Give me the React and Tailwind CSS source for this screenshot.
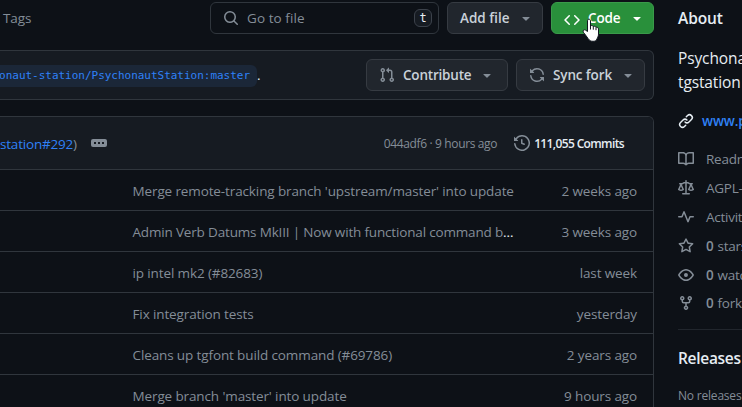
const paths = {
  search: "M10.68 11.74a6 6 0 0 1-7.922-8.982 6 6 0 0 1 8.982 7.922l3.04 3.04a.749.749 0 0 1-.326 1.275.749.749 0 0 1-.734-.215ZM11.5 7a4.499 4.499 0 1 0-8.997 0A4.499 4.499 0 0 0 11.5 7Z",
  pull: "M1.5 3.25a2.25 2.25 0 1 1 3 2.122v5.256a2.251 2.251 0 1 1-1.5 0V5.372A2.25 2.25 0 0 1 1.5 3.25Zm5.677-.177L9.573.677A.25.25 0 0 1 10 .854V2.5h1A2.5 2.5 0 0 1 13.5 5v5.628a2.251 2.251 0 1 1-1.5 0V5a1 1 0 0 0-1-1h-1v1.646a.25.25 0 0 1-.427.177L7.177 3.427a.25.25 0 0 1 0-.354ZM3.75 2.5a.75.75 0 1 0 0 1.5.75.75 0 0 0 0-1.5Zm0 9.5a.75.75 0 1 0 0 1.5.75.75 0 0 0 0-1.5Zm8.25.75a.75.75 0 1 0 1.5 0 .75.75 0 0 0-1.5 0Z",
  sync: "M1.705 8.005a.75.75 0 0 1 .834.656 5.5 5.5 0 0 0 9.592 2.97l-1.204-1.204a.25.25 0 0 1 .177-.427h3.646a.25.25 0 0 1 .25.25v3.646a.25.25 0 0 1-.427.177l-1.38-1.38A7.002 7.002 0 0 1 1.05 8.84a.75.75 0 0 1 .656-.834ZM8 2.5a5.487 5.487 0 0 0-4.131 1.869l1.204 1.204A.25.25 0 0 1 4.896 6H1.25A.25.25 0 0 1 1 5.75V2.104a.25.25 0 0 1 .427-.177l1.38 1.38A7.002 7.002 0 0 1 14.95 7.16a.75.75 0 0 1-1.49.178A5.5 5.5 0 0 0 8 2.5Z",
  code: "m11.28 3.22 4.25 4.25a.75.75 0 0 1 0 1.06l-4.25 4.25a.749.749 0 0 1-1.275-.326.749.749 0 0 1 .215-.734L13.94 8l-3.72-3.72a.749.749 0 0 1 .326-1.275.749.749 0 0 1 .734.215Zm-6.56 0a.751.751 0 0 1 1.042.018.751.751 0 0 1 .018 1.042L2.06 8l3.72 3.72a.749.749 0 0 1-.326 1.275.749.749 0 0 1-.734-.215L.47 8.53a.75.75 0 0 1 0-1.06Z",
  link: "m7.775 3.275 1.25-1.25a3.5 3.5 0 1 1 4.95 4.95l-2.5 2.5a3.5 3.5 0 0 1-4.95 0 .751.751 0 0 1 .018-1.042.751.751 0 0 1 1.042-.018 1.998 1.998 0 0 0 2.83 0l2.5-2.5a2.002 2.002 0 0 0-2.83-2.83l-1.25 1.25a.751.751 0 0 1-1.042-.018.751.751 0 0 1-.018-1.042Zm-4.69 9.64a1.998 1.998 0 0 0 2.83 0l1.25-1.25a.751.751 0 0 1 1.042.018.751.751 0 0 1 .018 1.042l-1.25 1.25a3.5 3.5 0 1 1-4.95-4.95l2.5-2.5a3.5 3.5 0 0 1 4.95 0 .751.751 0 0 1-.018 1.042.751.751 0 0 1-1.042.018 1.998 1.998 0 0 0-2.83 0l-2.5 2.5a1.998 1.998 0 0 0 0 2.83Z",
  book: "M0 1.75A.75.75 0 0 1 .75 1h4.253c1.227 0 2.317.59 3 1.501A3.743 3.743 0 0 1 11.006 1h4.245a.75.75 0 0 1 .75.75v10.5a.75.75 0 0 1-.75.75h-4.507a2.25 2.25 0 0 0-1.591.659l-.622.621a.75.75 0 0 1-1.06 0l-.622-.621A2.25 2.25 0 0 0 5.258 13H.75a.75.75 0 0 1-.75-.75Zm7.251 10.324.004-5.073-.002-2.253A2.25 2.25 0 0 0 5.003 2.5H1.5v9h3.757a3.75 3.75 0 0 1 1.994.574ZM8.755 4.75l-.004 7.322a3.752 3.752 0 0 1 1.992-.572H14.5v-9h-3.495a2.25 2.25 0 0 0-2.25 2.25Z",
  law: "M8.75.75V2h.985c.304 0 .603.08.867.231l1.29.736c.038.022.08.033.124.033h2.234a.75.75 0 0 1 0 1.5h-.427l2.111 4.692a.75.75 0 0 1-.154.838l-.53-.53.529.531-.001.002-.002.002-.006.006-.006.005-.01.01-.045.04c-.21.176-.441.327-.686.45C14.556 10.78 13.88 11 13 11a4.498 4.498 0 0 1-2.023-.454 3.544 3.544 0 0 1-.686-.45l-.045-.04-.016-.015-.006-.006-.004-.004v-.001a.75.75 0 0 1-.154-.838L12.178 4.5h-.162c-.305 0-.604-.079-.868-.231l-1.29-.736a.245.245 0 0 0-.124-.033H8.75V13h2.5a.75.75 0 0 1 0 1.5h-6.5a.75.75 0 0 1 0-1.5h2.5V3.5h-.984a.245.245 0 0 0-.124.033l-1.289.737c-.265.15-.564.23-.869.23h-.162l2.112 4.692a.75.75 0 0 1-.154.838l-.53-.53.529.531-.001.002-.002.002-.006.006-.016.015-.045.04c-.21.176-.441.327-.686.45C4.556 10.78 3.88 11 3 11a4.498 4.498 0 0 1-2.023-.454 3.544 3.544 0 0 1-.686-.45l-.045-.04-.016-.015-.006-.006-.004-.004v-.001a.75.75 0 0 1-.154-.838L2.178 4.5H1.75a.75.75 0 0 1 0-1.5h2.234a.249.249 0 0 0 .125-.033l1.288-.737c.265-.15.564-.23.869-.23h.984V.75a.75.75 0 0 1 1.5 0Zm2.945 8.477c.285.135.718.273 1.305.273s1.02-.138 1.305-.273L13 6.327Zm-10 0c.285.135.718.273 1.305.273s1.02-.138 1.305-.273L3 6.327Z",
  pulse: "M6 2c.306 0 .582.187.696.471L10 10.731l1.304-3.26A.751.751 0 0 1 12 7h3.25a.75.75 0 0 1 0 1.5h-2.742l-1.812 4.528a.751.751 0 0 1-1.392 0L6 4.77 4.696 8.03A.75.75 0 0 1 4 8.5H.75a.75.75 0 0 1 0-1.5h2.742l1.812-4.529A.751.751 0 0 1 6 2Z",
  star: "M8 .25a.75.75 0 0 1 .673.418l1.882 3.815 4.21.612a.75.75 0 0 1 .416 1.279l-3.046 2.97.719 4.192a.751.751 0 0 1-1.088.791L8 12.347l-3.766 1.98a.75.75 0 0 1-1.088-.79l.72-4.194L.818 6.374a.75.75 0 0 1 .416-1.28l4.21-.611L7.327.668A.75.75 0 0 1 8 .25Zm0 2.445L6.615 5.5a.75.75 0 0 1-.564.41l-3.097.45 2.24 2.184a.75.75 0 0 1 .216.664l-.528 3.084 2.769-1.456a.75.75 0 0 1 .698 0l2.77 1.456-.53-3.084a.75.75 0 0 1 .216-.664l2.24-2.183-3.096-.45a.75.75 0 0 1-.564-.41L8 2.694Z",
  eye: "M8 2c1.981 0 3.671.992 4.933 2.078 1.27 1.091 2.187 2.345 2.637 3.023a1.62 1.62 0 0 1 0 1.798c-.45.678-1.367 1.932-2.637 3.023C11.67 13.008 9.981 14 8 14c-1.981 0-3.671-.992-4.933-2.078C1.797 10.83.88 9.576.43 8.898a1.62 1.62 0 0 1 0-1.798c.45-.677 1.367-1.931 2.637-3.022C4.33 2.992 6.019 2 8 2ZM1.679 7.932a.12.12 0 0 0 0 .136c.411.622 1.241 1.75 2.366 2.717C5.176 11.758 6.527 12.5 8 12.5c1.473 0 2.825-.742 3.955-1.715 1.124-.967 1.954-2.096 2.366-2.717a.12.12 0 0 0 0-.136c-.412-.621-1.242-1.75-2.366-2.717C10.824 4.242 9.473 3.5 8 3.5c-1.473 0-2.825.742-3.955 1.715-1.124.967-1.954 2.096-2.366 2.717ZM8 10a2 2 0 1 1-.001-3.999A2 2 0 0 1 8 10Z",
  fork: "M5 5.372v.878c0 .414.336.75.75.75h4.5a.75.75 0 0 0 .75-.75v-.878a2.25 2.25 0 1 1 1.5 0v.878a2.25 2.25 0 0 1-2.25 2.25h-1.5v2.128a2.251 2.251 0 1 1-1.5 0V8.5h-1.5A2.25 2.25 0 0 1 3.5 6.25v-.878a2.25 2.25 0 1 1 1.5 0ZM5 3.25a.75.75 0 1 0-1.5 0 .75.75 0 0 0 1.5 0Zm6.75.75a.75.75 0 1 0 0-1.5.75.75 0 0 0 0 1.5Zm-3 8.75a.75.75 0 1 0-1.5 0 .75.75 0 0 0 1.5 0Z",
  history: "m.427 1.927 1.215 1.215a8.002 8.002 0 1 1-1.6 5.685.75.75 0 1 1 1.493-.154 6.5 6.5 0 1 0 1.18-4.458l1.358 1.358A.25.25 0 0 1 3.896 6H.25A.25.25 0 0 1 0 5.75V2.104a.25.25 0 0 1 .427-.177ZM7.75 4a.75.75 0 0 1 .75.75v2.992l2.028.812a.75.75 0 0 1-.557 1.392l-2.5-1A.751.751 0 0 1 7 8.25v-3.5A.75.75 0 0 1 7.75 4Z",
  caret: "m4.427 7.427 3.396 3.396a.25.25 0 0 0 .354 0l3.396-3.396A.25.25 0 0 0 11.396 7H4.604a.25.25 0 0 0-.177.427Z",
};

function Icon({ name, className = "" }) {
  return (
    <svg viewBox="0 0 16 16" width="16" height="16" fill="currentColor" className={`shrink-0 ${className}`}>
      <path d={paths[name]} />
    </svg>
  );
}

const rows = [
  ["Merge remote-tracking branch 'upstream/master' into update", "2 weeks ago"],
  ["Admin Verb Datums MkIII | Now with functional command b", "3 weeks ago", true],
  ["ip intel mk2 (#82683)", "last week"],
  ["Fix integration tests", "yesterday"],
  ["Cleans up tgfont build command (#69786)", "2 years ago"],
  ["Merge branch 'master' into update", "9 hours ago"],
];

const facts = [
  ["book", "", "Readme"],
  ["law", "", "AGPL-3.0"],
  ["pulse", "", "Activity"],
  ["star", "0", "stars"],
  ["eye", "0", "watching"],
  ["fork", "0", "forks"],
];

const button =
  "flex h-8 items-center rounded-md border border-[#363b42] bg-[#21262d] font-semibold text-[#c9d1d9]";

function Hand() {
  return (
    <svg viewBox="0 0 18 24" className="absolute left-[582px] top-[18px] h-6 w-[18px]">
      <path
        d="M5.5 13.5V3C5.5.6 8.5.6 8.5 3v5c.7-.8 2.4-.6 2.8.5.8-.6 2.3-.3 2.6.8 1.2-.5 2.6.2 2.6 1.8v5c0 2.4-1 3.3-1.4 4.6-.7 1.8-2 2.6-4 2.6-2.400 0-3.600-.8-4.900-2.600C4.600 18.400 2.800 16 1.300 14.200c-1-1.700.9-3.100 2.400-2Z"
        fill="#fff"
        stroke="#111820"
        strokeWidth="1"
      />
      <path d="M8.500 7.500v4M11.300 8.500v3.200M14 9.500v2.700" stroke="#111820" strokeWidth="1" fill="none" />
    </svg>
  );
}

export default function App() {
  return (
    <div className="relative flex h-[407px] w-[742px] gap-6 overflow-hidden bg-[#0d1117] font-['Open_Sans','Noto_Sans',sans-serif] text-[13.5px] leading-5 tracking-[-0.12px] text-[#848d97] whitespace-nowrap">
      <main className="flex w-[654px] shrink-0 flex-col pt-0.5">
        <div className="flex h-8 shrink-0 items-center">
          <span className="w-[210px] pl-[3px]">Tags</span>
          <div className="mr-2 flex h-8 w-[229px] items-center rounded-md border border-[#30363d] pl-3 pr-1.5">
            <Icon name="search" />
            <span className="ml-2 flex-1 tracking-[0.08px]">Go to file</span>
            <kbd className="flex h-[18px] w-[18px] items-center justify-center rounded-md border border-[#3c424b] bg-[#161b22] font-['DejaVu_Sans_Mono',monospace] text-[12px] leading-none text-[#e6edf3]">t</kbd>
          </div>
          <div className={`${button} mr-2 w-24 justify-between pl-3 pr-2`}>
            <span className="tracking-[0px]">Add file</span>
            <Icon name="caret" className="text-[#848d97]" />
          </div>
          <div className="flex h-8 w-[103px] items-center rounded-md border border-[#3a9a4a] bg-[#29903b] pl-3 pr-2 font-semibold text-white">
            <Icon name="code" className="mt-1" />
            <span className="ml-2 flex-1">Code</span>
            <Icon name="caret" />
          </div>
        </div>

        <section className="mt-4 flex h-[50px] shrink-0 items-center rounded-r-md border border-l-0 border-[#30363d] bg-[#161b22] pr-2">
          <code className="mt-px flex h-[22px] w-[257px] shrink-0 items-center justify-end rounded-r-md bg-[#1b2738] pr-[7px] pt-px font-['DejaVu_Sans_Mono',monospace] text-[11px] tracking-[-0.02px] text-[#2f81f7]">
            onaut-station/PsychonautStation:master
          </code>
          <span className="flex-1 text-[#e6edf3]">.</span>
          <div className={`${button} mr-2 w-[142px] pl-3 pr-3`}>
            <Icon name="pull" className="text-[#848d97]" />
            <span className="ml-2 flex-1 tracking-[-0.2px]">Contribute</span>
            <Icon name="caret" className="text-[#848d97]" />
          </div>
          <div className={`${button} w-[129px] pl-3 pr-2`}>
            <Icon name="sync" className="text-[#848d97]" />
            <span className="ml-2 flex-1">Sync fork</span>
            <Icon name="caret" className="text-[#848d97]" />
          </div>
        </section>

        <section className="mt-4 flex h-[320px] shrink-0 flex-col overflow-hidden rounded-tr-md border-r border-t border-[#30363d]">
          <div className="flex h-[52px] shrink-0 items-center bg-[#161b22] pt-0.5">
            <span className="tracking-[-0.2px]"><span className="text-[#2f81f7]">station#292</span>)</span>
            <span className="ml-3.5 mb-0.5 flex h-2 w-4 items-center justify-center gap-[2px] rounded-[2px] bg-[#848d97]">
              <i className="size-[2px] bg-[#161b22]" />
              <i className="size-[2px] bg-[#161b22]" />
              <i className="size-[2px] bg-[#161b22]" />
            </span>
            <span className="ml-auto text-[12px] tracking-[-0.36px]">044adf6 · 9 hours ago</span>
            <Icon name="history" className="mb-0.5 ml-[17px]" />
            <span className="ml-1 mr-[29px] text-[12px] font-semibold tracking-[-0.63px] text-[#e6edf3]">111,055 Commits</span>
          </div>
          {rows.map(([message, age, cut]) => (
            <div key={message} className="flex h-[41px] shrink-0 items-center justify-between border-t border-[#30363d] pl-[132.500px] pr-4 pt-0.5">
              <span className={cut ? "tracking-[-0.17px]" : ""}>{message}{cut && <span className="text-[#e6edf3]">…</span>}</span>
              <span>{age}</span>
            </div>
          ))}
        </section>
      </main>

      <aside className="flex w-[296px] shrink-0 flex-col pt-1.5">
        <h2 className="text-[15.5px] font-semibold leading-6 text-[#e6edf3]">About</h2>
        <p className="mt-4 text-[15.5px] leading-6 text-[#e6edf3]">
          Psychonaut<br />tgstation
        </p>
        <div className="mt-[17px] flex h-5 items-center gap-2 font-semibold">
          <Icon name="link" className="text-[#e6edf3]" />
          <span className="text-[#2f81f7]">www.psychonaut</span>
        </div>
        <ul className="mt-3.5 flex flex-col">
          {facts.map(([icon, count, label]) => (
            <li key={icon} className="flex h-[28.8px] items-center gap-3">
              <Icon name={icon} />
              <span className="tracking-[-0.25px]">{count && <b className="mr-1 font-semibold">{count}</b>}{label}</span>
            </li>
          ))}
        </ul>
        <div className="mt-[11px] border-t border-[#21262d] pt-4">
          <h2 className="text-[15.5px] font-semibold leading-6 tracking-[-0.3px] text-[#e6edf3]">Releases</h2>
          <p className="mt-4 text-[12px] leading-5 tracking-[-0.2px]">No releases</p>
        </div>
      </aside>
      <Hand />
    </div>
  );
}
